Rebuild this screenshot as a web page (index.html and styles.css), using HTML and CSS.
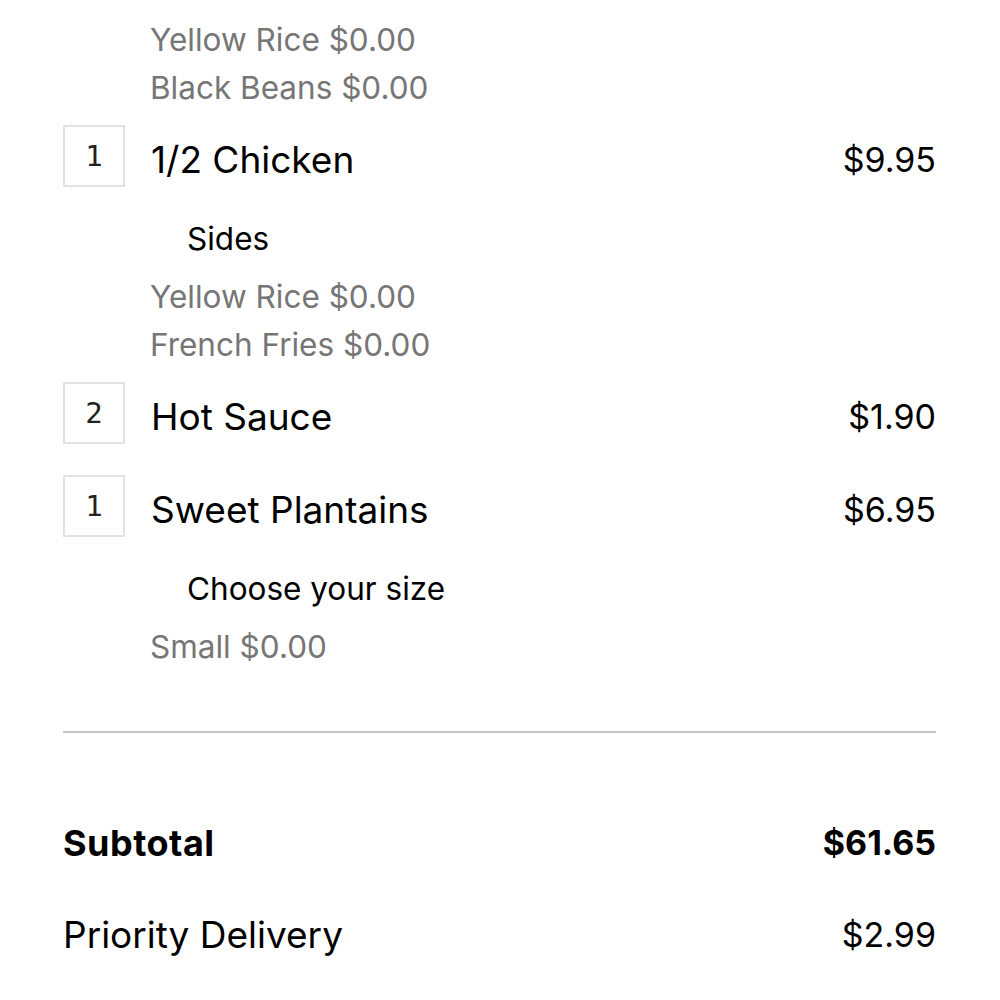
FILE: index.html
```html
<!DOCTYPE html>
<html lang="en">
<head>
  <meta charset="UTF-8" />
  <meta name="viewport" content="width=device-width, initial-scale=1.0" />
  <title>Order Receipt</title>
  <link rel="stylesheet" href="styles.css">
</head>
<body>
  <div class="receipt">
    <div class="items">
      <div class="item item-cut">
        <div class="mods">
          <div class="mod">Yellow Rice $0.00</div>
          <div class="mod">Black Beans $0.00</div>
        </div>
      </div>

      <div class="item">
        <div class="row">
          <div class="qty">1</div>
          <div class="name">1/2 Chicken</div>
          <div class="price">$9.95</div>
        </div>
        <div class="mods">
          <div class="mod-title">Sides</div>
          <div class="mod">Yellow Rice $0.00</div>
          <div class="mod">French Fries $0.00</div>
        </div>
      </div>

      <div class="item">
        <div class="row">
          <div class="qty">2</div>
          <div class="name">Hot Sauce</div>
          <div class="price">$1.90</div>
        </div>
      </div>

      <div class="item">
        <div class="row">
          <div class="qty">1</div>
          <div class="name">Sweet Plantains</div>
          <div class="price">$6.95</div>
        </div>
        <div class="mods">
          <div class="mod-title">Choose your size</div>
          <div class="mod">Small $0.00</div>
        </div>
      </div>
    </div>

    <hr class="divider">

    <div class="totals">
      <div class="total-row subtotal">
        <span>Subtotal</span>
        <span>$61.65</span>
      </div>
      <div class="total-row">
        <span>Priority Delivery</span>
        <span>$2.99</span>
      </div>
    </div>
  </div>
</body>
</html>
```

FILE: styles.css
```css
body { margin: 0; background: #fff; color: #000; font-family: Inter, "Noto Sans", sans-serif; }
.receipt { padding: 0 64px 0 63px; }

.item { padding-bottom: 13px; }
.item-cut { padding-top: 16px; }
.row { display: flex; align-items: center; height: 62px; margin-bottom: 18px; }
.qty { width: 58px; height: 58px; border: 2px solid #e2e2e2; display: flex; align-items: center; justify-content: center; font-family: "DejaVu Sans Mono", monospace; font-size: 29px; color: #222; }
.name { flex: 1; margin-left: 26px; padding-top: 6px; font-size: 37px; }
.price { padding-top: 6px; font-size: 34px; }

.mods { padding: 10px 0 0 87px; }
.item-cut .mods { padding-top: 0; }
.mod-title { margin: 0 0 10px 37px; font-size: 31.5px; line-height: 48px; }
.mod { font-size: 31.5px; line-height: 48px; color: #767676; }

.divider { margin: 47px 0 0; border: none; border-top: 2px solid #c6c6c6; }

.totals { padding-top: 86px; }
.total-row { display: flex; justify-content: space-between; font-size: 37px; line-height: 48px; margin-bottom: 44px; }
.total-row span:last-child { font-size: 34px; }
.subtotal { font-weight: 700; }
.subtotal span:first-child { font-size: 36px; letter-spacing: 0.5px; }
```
